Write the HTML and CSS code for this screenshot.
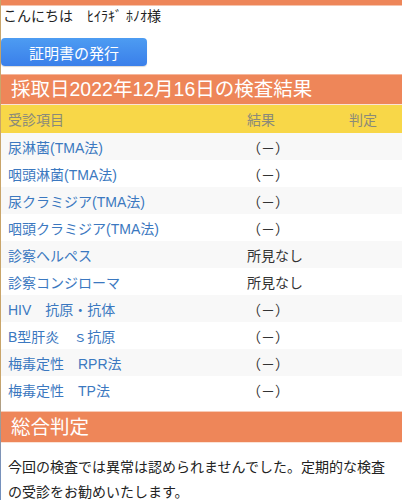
FILE: index.html
```html
<!DOCTYPE html>
<html lang="ja">
<head>
<meta charset="utf-8">
<link rel="stylesheet" href="styles.css">
</head>
<body>
<div class="page">
  <div class="topbar"></div>
  <p class="greeting">こんにちは　ﾋｲﾗｷﾞ ﾎﾉｵ様</p>
  <button class="issue-btn">証明書の発行</button>
  <h2 class="section-head">採取日2022年12月16日の検査結果</h2>
  <div class="results">
    <div class="row head"><span>受診項目</span><span>結果</span><span>判定</span></div>
    <div class="row"><span class="item">尿淋菌(TMA法)</span><span class="val">（－）</span><span></span></div>
    <div class="row"><span class="item">咽頭淋菌(TMA法)</span><span class="val">（－）</span><span></span></div>
    <div class="row"><span class="item">尿クラミジア(TMA法)</span><span class="val">（－）</span><span></span></div>
    <div class="row"><span class="item">咽頭クラミジア(TMA法)</span><span class="val">（－）</span><span></span></div>
    <div class="row"><span class="item">診察ヘルペス</span><span class="val">所見なし</span><span></span></div>
    <div class="row"><span class="item">診察コンジローマ</span><span class="val">所見なし</span><span></span></div>
    <div class="row"><span class="item">HIV　抗原・抗体</span><span class="val">（－）</span><span></span></div>
    <div class="row"><span class="item">B型肝炎　ｓ抗原</span><span class="val">（－）</span><span></span></div>
    <div class="row"><span class="item">梅毒定性　RPR法</span><span class="val">（－）</span><span></span></div>
    <div class="row"><span class="item">梅毒定性　TP法</span><span class="val">（－）</span><span></span></div>
  </div>
  <h2 class="section-head second">総合判定</h2>
  <p class="summary">今回の検査では異常は認められませんでした。定期的な検査の受診をお勧めいたします。</p>
</div>
</body>
</html>
```
FILE: styles.css
```css
html, body {
  margin: 0;
  padding: 0;
  background: #fff;
}
body {
  font-family: "Liberation Sans", "Noto Sans CJK JP", sans-serif;
  color: #222;
  width: 402px;
  overflow: hidden;
}
.page {
  min-height: 500px;
  border-left: 1px solid #c9a56a;
  border-image: linear-gradient(#c9a56a 0%, #c9a56a 75%, #7d93b8 90%, #6f8fc0 100%) 1;
}
.topbar {
  height: 5px;
  background: #ee8659;
  border-bottom: 1px solid #f6c4ad;
}
.greeting {
  margin: 0;
  padding: 0 2px;
  font-size: 14px;
  line-height: 20px;
  color: #222;
}
.issue-btn {
  display: block;
  margin: 12px 0 0 0;
  width: 146px;
  height: 28px;
  border: none;
  border-radius: 4px;
  background: linear-gradient(#4d9cf2, #3a7fea);
  color: #fff;
  font-family: inherit;
  font-size: 15px;
  padding: 0;
  box-shadow: 0 1px 1px rgba(0,0,0,0.15);
}
.section-head {
  margin: 8px 0 0 0;
  background: #ee8659;
  border-top: 1px solid #f6b79c;
  border-bottom: 1px solid #fbe3d6;
  color: #fff;
  font-weight: normal;
  font-size: 19.5px;
  height: 29px;
  line-height: 29px;
  padding-left: 10px;
}
.section-head.second {
  margin-top: 8px;
  height: 30px;
  line-height: 30px;
  border-top-color: #f8cbb6;
}
.results {
  display: flex;
  flex-direction: column;
}
.row {
  display: grid;
  grid-template-columns: 239px 102px 1fr;
  padding-left: 7px;
  height: 27px;
  align-items: center;
  font-size: 14px;
}
.row:nth-child(even) {
  background: #f8f8f8;
}
.row.head {
  background: #f8d748;
  color: #8a8a7a;
  height: 28px;
}
.item {
  color: #3b78c0;
}
.val {
  color: #333;
  font-family: "Noto Sans CJK JP", sans-serif;
}
.summary {
  margin: 12px 0 0 0;
  padding: 0 7px;
  font-size: 14px;
  line-height: 25px;
  color: #222;
}
```
